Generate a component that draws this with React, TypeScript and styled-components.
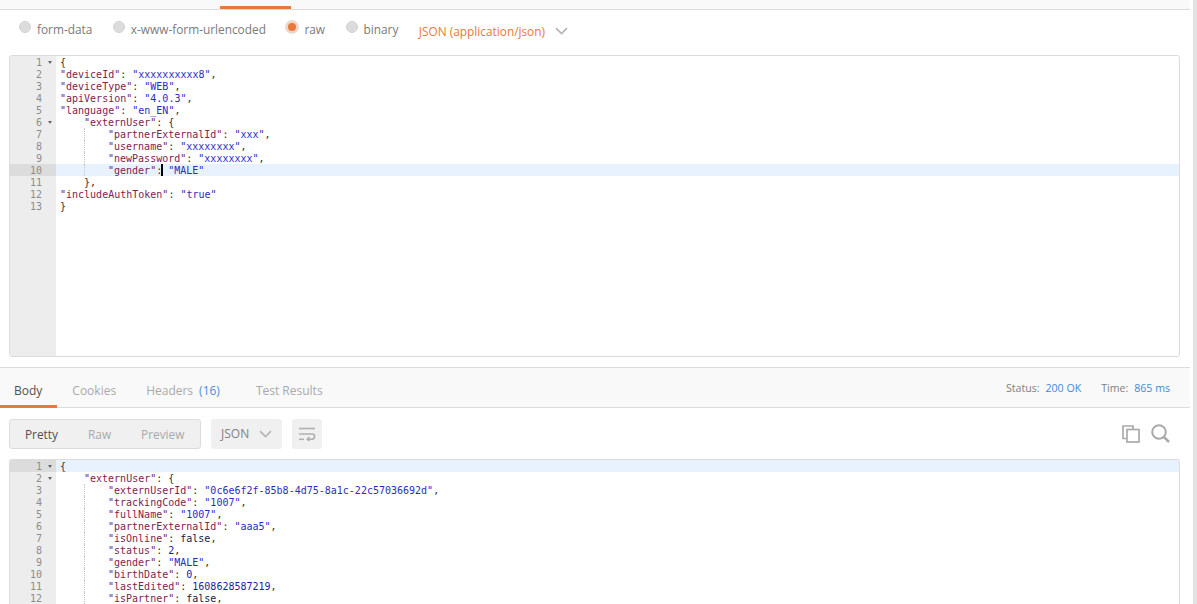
import React from "react";
import styled, { createGlobalStyle } from "styled-components";

const Global = createGlobalStyle`
  html, body { margin: 0; padding: 0; background: #fff; }
  body { font-family: "Open Sans", "Liberation Sans", sans-serif; overflow: hidden; }
`;

const Page = styled.div`
  width: 1197px; height: 604px; display: flex; overflow: hidden; background: #fff;
`;
const Main = styled.div`
  width: 1190px; display: flex; flex-direction: column; flex: none;
`;
const Scrollbar = styled.div`
  margin-left: 3px; width: 4px; background: #e2e2e2; flex: none;
`;
const TopBar = styled.div`
  height: 9px; flex: none; background: #f9f9f9; border-bottom: 1px solid #dcdcdc; padding-left: 220px;
`;
const ActiveStrip = styled.div`
  width: 71px; height: 3px; margin-top: 6px; background: #e8793a;
`;
const ModeRow = styled.div`
  height: 45px; flex: none; display: flex; align-items: center; padding: 0 0 7px 19px; box-sizing: border-box;
`;
const ModeOption = styled.label`
  display: flex; align-items: center; gap: 6px; margin-right: 20.5px;
  font-size: 11.85px; color: #7b7b7b;
`;
const Radio = styled.span<{ $on?: boolean }>`
  width: 12px; height: 12px; border-radius: 50%; box-sizing: border-box; flex: none;
  background: ${p => (p.$on ? "#e8793a" : "#dcdcdc")};
  border: ${p => (p.$on ? "2px solid #f1d3bf" : "1px solid #d4d4d4")};
  box-shadow: ${p => (p.$on ? "0 0 0 1px #e2e2e2" : "none")};
  position: relative; top: -2px;
`;
const TypeSelect = styled.div`
  display: flex; align-items: center; gap: 10px; color: #e8793a; font-size: 11.85px; position: relative; top: 2px;
`;
const Chevron = styled.svg`
  display: block; flex: none;
`;
const Editor = styled.div<{ $height: number; $open?: boolean }>`
  margin: 0 10px 0 9px; height: ${p => p.$height}px; flex: none; box-sizing: border-box;
  display: flex; overflow: hidden; background: #fff;
  border: 1px solid #dcdcdc; border-radius: ${p => (p.$open ? "3px 3px 0 0" : "3px")};
  border-bottom-width: ${p => (p.$open ? 0 : 1)}px;
  font-family: "DejaVu Sans Mono", "Liberation Mono", monospace; font-size: 10px;
`;
const Gutter = styled.div`
  width: 46px; flex: none; background: #ededed; color: #8c8c8c;
`;
const GutterCell = styled.div<{ $active?: boolean }>`
  height: 12px; line-height: 14px; display: flex; justify-content: flex-end; align-items: flex-start; padding-right: 14px;
  position: relative; background: ${p => (p.$active ? "#dcdcdc" : "transparent")};
`;
const Fold = styled.span`
  position: absolute; right: 4px; top: 5px; width: 0; height: 0;
  border-left: 2.5px solid transparent; border-right: 2.5px solid transparent; border-top: 3px solid #666;
`;
const Code = styled.div`
  flex: 1; min-width: 0;
`;
const CodeLine = styled.div<{ $active?: boolean }>`
  height: 12px; line-height: 14px; white-space: pre; padding-left: 4px; display: flex;
  color: #333; background: ${p => (p.$active ? "#e8f2ff" : "transparent")};
`;
const Indent = styled.span<{ $guide?: boolean }>`
  display: inline-block; width: 24px; height: 12px; flex: none; box-sizing: border-box;
  border-left: ${p => (p.$guide ? "1px dotted #c4c4c4" : "0")};
`;
const Key = styled.span`color: #7d2350;`;
const Str = styled.span`color: #2b2bc4;`;
const Num = styled.span`color: #1b1ba8;`;
const Bool = styled.span`color: #17233f;`;
const Caret = styled.span`
  display: inline-block; width: 2px; height: 12px; background: #000; margin: 0 -1px 0 -1px; vertical-align: top;
`;
const TabsBar = styled.div`
  margin-top: 10px; height: 41px; flex: none; box-sizing: border-box; background: #f9f9f9;
  border-top: 1px solid #dcdcdc; border-bottom: 1px solid #dcdcdc;
  display: flex; align-items: stretch; justify-content: space-between; padding-right: 20px;
`;
const Tabs = styled.div`display: flex; align-items: stretch;`;
const Tab = styled.div<{ $active?: boolean }>`
  padding: 7px 15px 0 ${p => (p.$active ? 14 : 15)}px;
  display: flex; align-items: center; gap: 6px; font-size: 12px; box-sizing: border-box;
  color: ${p => (p.$active ? "#505050" : "#a9a9a9")};
  border-bottom: 3px solid ${p => (p.$active ? "#e8793a" : "transparent")};
  margin-bottom: -1px;
`;
const Count = styled.span`color: #4a90d9; margin-right: 6px;`;
const Stats = styled.div`
  display: flex; align-items: center; gap: 20px; font-size: 10.6px; color: #808080; padding-top: 1px;
`;
const Stat = styled.span`display: flex; gap: 6px;`;
const StatValue = styled.span`color: #3c8ad8;`;
const Toolbar = styled.div`
  height: 51px; flex: none; display: flex; align-items: center; padding: 0 20px 0 9px; box-sizing: border-box; gap: 10px;
`;
const Segmented = styled.div`
  display: flex; align-items: center; width: 192px; height: 30px; box-sizing: border-box; padding-left: 15px; gap: 30px;
  background: #f0f0f0; border: 1px solid #dcdcdc; border-radius: 3px; font-size: 11.85px;
`;
const Segment = styled.span<{ $active?: boolean }>`
  color: ${p => (p.$active ? "#505050" : "#a9a9a9")};
`;
const FormatSelect = styled.div`
  display: flex; align-items: center; gap: 10px; width: 71px; height: 30px; box-sizing: border-box; padding-left: 10px;
  background: #f0f0f0; border-radius: 3px; font-size: 12px; color: #808080;
`;
const IconButton = styled.div`
  width: 30px; height: 30px; display: flex; align-items: center; justify-content: center;
  background: #f0f0f0; border-radius: 3px;
`;
const ToolIcons = styled.div`
  margin-left: auto; display: flex; align-items: center; gap: 11px;
`;

type Tok = { k?: string; s?: string; n?: string; b?: string; p?: string; caret?: boolean };
type Ln = { d?: number; fold?: boolean; active?: boolean; t: Tok[] };

const req: Ln[] = [
  { fold: true, t: [{ p: "{" }] },
  { t: [{ k: '"deviceId"' }, { p: ": " }, { s: '"xxxxxxxxxx8"' }, { p: "," }] },
  { t: [{ k: '"deviceType"' }, { p: ": " }, { s: '"WEB"' }, { p: "," }] },
  { t: [{ k: '"apiVersion"' }, { p: ": " }, { s: '"4.0.3"' }, { p: "," }] },
  { t: [{ k: '"language"' }, { p: ": " }, { s: '"en_EN"' }, { p: "," }] },
  { d: 1, fold: true, t: [{ k: '"externUser"' }, { p: ": {" }] },
  { d: 2, t: [{ k: '"partnerExternalId"' }, { p: ": " }, { s: '"xxx"' }, { p: "," }] },
  { d: 2, t: [{ k: '"username"' }, { p: ": " }, { s: '"xxxxxxxx"' }, { p: "," }] },
  { d: 2, t: [{ k: '"newPassword"' }, { p: ": " }, { s: '"xxxxxxxx"' }, { p: "," }] },
  { d: 2, active: true, t: [{ k: '"gender"' }, { p: ":" }, { caret: true }, { p: " " }, { s: '"MALE"' }] },
  { d: 1, t: [{ p: "}," }] },
  { t: [{ k: '"includeAuthToken"' }, { p: ": " }, { s: '"true"' }] },
  { t: [{ p: "}" }] },
];

const res: Ln[] = [
  { active: true, fold: true, t: [{ p: "{" }] },
  { d: 1, fold: true, t: [{ k: '"externUser"' }, { p: ": {" }] },
  { d: 2, t: [{ k: '"externUserId"' }, { p: ": " }, { s: '"0c6e6f2f-85b8-4d75-8a1c-22c57036692d"' }, { p: "," }] },
  { d: 2, t: [{ k: '"trackingCode"' }, { p: ": " }, { s: '"1007"' }, { p: "," }] },
  { d: 2, t: [{ k: '"fullName"' }, { p: ": " }, { s: '"1007"' }, { p: "," }] },
  { d: 2, t: [{ k: '"partnerExternalId"' }, { p: ": " }, { s: '"aaa5"' }, { p: "," }] },
  { d: 2, t: [{ k: '"isOnline"' }, { p: ": " }, { b: "false" }, { p: "," }] },
  { d: 2, t: [{ k: '"status"' }, { p: ": " }, { n: "2" }, { p: "," }] },
  { d: 2, t: [{ k: '"gender"' }, { p: ": " }, { s: '"MALE"' }, { p: "," }] },
  { d: 2, t: [{ k: '"birthDate"' }, { p: ": " }, { n: "0" }, { p: "," }] },
  { d: 2, t: [{ k: '"lastEdited"' }, { p: ": " }, { n: "1608628587219" }, { p: "," }] },
  { d: 2, t: [{ k: '"isPartner"' }, { p: ": " }, { b: "false" }, { p: "," }] },
];

const Lines = ({ lines }: { lines: Ln[] }) => (
  <>
    <Gutter>
      {lines.map((l, i) => (
        <GutterCell key={i} $active={l.active}>
          {i + 1}
          {l.fold && <Fold />}
        </GutterCell>
      ))}
    </Gutter>
    <Code>
      {lines.map((l, i) => (
        <CodeLine key={i} $active={l.active}>
          {Array.from({ length: l.d || 0 }, (_, j) => <Indent key={j} $guide={j === 1} />)}
          <span>
            {l.t.map((t, j) =>
              t.k ? <Key key={j}>{t.k}</Key>
              : t.s ? <Str key={j}>{t.s}</Str>
              : t.n ? <Num key={j}>{t.n}</Num>
              : t.b ? <Bool key={j}>{t.b}</Bool>
              : t.caret ? <Caret key={j} />
              : <span key={j}>{t.p}</span>
            )}
          </span>
        </CodeLine>
      ))}
    </Code>
  </>
);

const Down = () => (
  <Chevron width={13} height={8} viewBox="0 0 13 8" fill="none">
    <path d="M1 1.2 L6.5 6.6 L12 1.2" stroke="#b5b5b5" strokeWidth="1.7" />
  </Chevron>
);

export default function App() {
  return (
    <Page>
      <Global />
      <Main>
        <TopBar><ActiveStrip /></TopBar>
        <ModeRow>
          <ModeOption><Radio />form-data</ModeOption>
          <ModeOption><Radio />x-www-form-urlencoded</ModeOption>
          <ModeOption><Radio $on />raw</ModeOption>
          <ModeOption><Radio />binary</ModeOption>
          <TypeSelect>JSON (application/json)<Down /></TypeSelect>
        </ModeRow>
        <Editor $height={302}><Lines lines={req} /></Editor>
        <TabsBar>
          <Tabs>
            <Tab $active>Body</Tab>
            <Tab>Cookies</Tab>
            <Tab>Headers <Count>(16)</Count></Tab>
            <Tab>Test Results</Tab>
          </Tabs>
          <Stats>
            <Stat>Status: <StatValue>200 OK</StatValue></Stat>
            <Stat>Time: <StatValue>865 ms</StatValue></Stat>
          </Stats>
        </TabsBar>
        <Toolbar>
          <Segmented>
            <Segment $active>Pretty</Segment>
            <Segment>Raw</Segment>
            <Segment>Preview</Segment>
          </Segmented>
          <FormatSelect>JSON<Down /></FormatSelect>
          <IconButton>
            <svg width="18" height="14" viewBox="0 0 18 14" fill="none" stroke="#b0b0b0" strokeWidth="1.6">
              <path d="M1 1.5 H17" />
              <path d="M1 7 H14 a2.6 2.6 0 0 1 0 5.2 H9.5" />
              <path d="M11.5 10 L9.2 12.2 L11.5 14" />
              <path d="M1 12.3 H6" />
            </svg>
          </IconButton>
          <ToolIcons>
            <svg width="18" height="18" viewBox="0 0 18 18" fill="none" stroke="#ababab" strokeWidth="1.7">
              <path d="M4.5 13.5 H1 V1 H11 V4" />
              <rect x="5" y="4.5" width="12" height="12.5" />
            </svg>
            <svg width="19" height="19" viewBox="0 0 19 19" fill="none" stroke="#ababab" strokeWidth="2">
              <circle cx="8" cy="8" r="6.8" />
              <path d="M12.8 12.8 L18 18" strokeWidth="2.6" />
            </svg>
          </ToolIcons>
        </Toolbar>
        <Editor $height={145} $open><Lines lines={res} /></Editor>
      </Main>
      <Scrollbar />
    </Page>
  );
}
